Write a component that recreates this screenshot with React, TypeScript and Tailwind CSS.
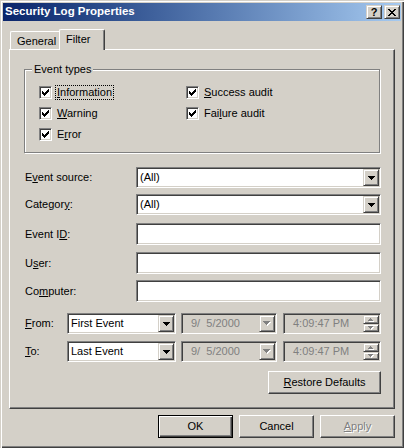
import React from "react";

const sunken =
  "border border-t-[#808080] border-l-[#808080] border-r-white border-b-white shadow-[inset_1px_1px_#404040,inset_-1px_-1px_#d4d0c8]";
const raisedBtn =
  "border border-t-[#d4d0c8] border-l-[#d4d0c8] border-r-[#404040] border-b-[#404040] shadow-[inset_1px_1px_#fff,inset_-1px_-1px_#808080]";
const pushBtn =
  "border border-t-white border-l-white border-r-[#404040] border-b-[#404040] shadow-[inset_-1px_-1px_#808080]";

function DownArrow({ disabled }: { disabled?: boolean }) {
  const d = "M0 0h7v1H0z M1 1h5v1H1z M2 2h3v1H2z M3 3h1v1H3z";
  if (disabled) {
    return (
      <svg width="8" height="5" viewBox="0 0 8 5" shapeRendering="crispEdges">
        <path d={d} fill="#fff" transform="translate(1 1)" />
        <path d={d} fill="#808080" />
      </svg>
    );
  }
  return (
    <svg width="7" height="4" viewBox="0 0 7 4" shapeRendering="crispEdges">
      <path d={d} fill="#000" />
    </svg>
  );
}

function SpinArrow({ up }: { up?: boolean }) {
  const d = up ? "M2 0h1v1H2z M1 1h3v1H1z M0 2h5v1H0z" : "M0 0h5v1H0z M1 1h3v1H1z M2 2h1v1H2z";
  return (
    <svg width="6" height="4" viewBox="0 0 6 4" shapeRendering="crispEdges">
      <path d={d} fill="#fff" transform="translate(1 1)" />
      <path d={d} fill="#808080" />
    </svg>
  );
}

function Check() {
  return (
    <svg width="7" height="7" viewBox="0 0 7 7" shapeRendering="crispEdges">
      <path
        d="M0 2h1v3H0z M1 3h1v3H1z M2 4h1v3H2z M3 3h1v3H3z M4 2h1v3H4z M5 1h1v3H5z M6 0h1v3H6z"
        fill="#000"
      />
    </svg>
  );
}

function CheckBox({ children, focus }: { children: React.ReactNode; focus?: boolean }) {
  return (
    <div className="flex items-center h-[13px]">
      <span className={`w-[13px] h-[13px] bg-white flex items-center justify-center shrink-0 ${sunken}`}>
        <Check />
      </span>
      <span
        className={`ml-[3px] px-[1px] leading-[13px] border ${
          focus ? "border-dotted border-black" : "border-transparent"
        }`}
      >
        {children}
      </span>
    </div>
  );
}

function Combo({
  text,
  w,
  disabled,
}: {
  text: string;
  w: string;
  disabled?: boolean;
}) {
  return (
    <div className={`flex h-[21px] p-[1px] ${w} ${disabled ? "bg-[#d4d0c8]" : "bg-white"} ${sunken}`}>
      <div
        className={`flex-1 flex items-center whitespace-pre ${disabled ? "pl-[8px] text-[#808080]" : "pl-[2px]"}`}
      >
        {text}
      </div>
      <div className={`w-[16px] h-full flex items-center justify-center bg-[#d4d0c8] ${raisedBtn}`}>
        <DownArrow disabled={disabled} />
      </div>
    </div>
  );
}

function TimeBox() {
  return (
    <div className={`flex h-[21px] p-[1px] w-[98px] bg-[#d4d0c8] ${sunken}`}>
      <div className="flex-1 flex items-center pl-[8px] text-[#808080]">4:09:47 PM</div>
      <div className="w-[16px] h-full flex flex-col">
        <div className={`h-[9px] flex items-center justify-center bg-[#d4d0c8] ${raisedBtn}`}>
          <SpinArrow up />
        </div>
        <div className={`h-[8px] flex items-center justify-center bg-[#d4d0c8] ${raisedBtn}`}>
          <SpinArrow />
        </div>
      </div>
    </div>
  );
}

function Edit() {
  return <div className={`h-[22px] w-[245px] bg-white ${sunken}`} />;
}

function Label({ children, w }: { children: React.ReactNode; w: string }) {
  return <span className={`${w} pl-[1px] shrink-0`}>{children}</span>;
}

export default function App() {
  return (
    <div className="w-[404px] h-[448px] bg-[#d4d0c8] p-[3px] flex flex-col font-['Liberation_Sans',Arial,sans-serif] text-[11px] text-black leading-none overflow-hidden shadow-[inset_1px_1px_#d4d0c8,inset_2px_2px_#fff,inset_-1px_-1px_#404040,inset_-2px_-2px_#808080]">
      {/* Title bar */}
      <div className="h-[18px] shrink-0 flex items-center bg-linear-to-r from-[#0a246a] to-[#a6caf0] pl-[2px] pr-[1px]">
        <span className="font-bold text-white text-[11.5px] flex-1">Security Log Properties</span>
        <div className="flex gap-[2px]">
          <div className={`w-[16px] h-[14px] bg-[#d4d0c8] flex items-center justify-center ${raisedBtn}`}>
            <span className="font-bold text-[11px] leading-none pt-[1px]">?</span>
          </div>
          <div className={`w-[16px] h-[14px] bg-[#d4d0c8] flex items-center justify-center ${raisedBtn}`}>
            <svg width="8" height="7" viewBox="0 0 8 7" shapeRendering="crispEdges">
              <path
                d="M0 0h2v1H0z M6 0h2v1H6z M1 1h2v1H1z M5 1h2v1H5z M2 2h4v1H2z M3 3h2v1H3z M2 4h4v1H2z M1 5h2v1H1z M5 5h2v1H5z M0 6h2v1H0z M6 6h2v1H6z"
                fill="#000"
              />
            </svg>
          </div>
        </div>
      </div>

      {/* Client */}
      <div className="ml-[6px] w-[386px] mt-[8px] flex flex-col">
        {/* Tabs */}
        <div className="h-[20px] flex items-end relative z-10">
          <div className="ml-[1px] w-[49px] h-[18px] border-t border-l border-t-white border-l-white rounded-tl-[2px] flex items-center pl-[6px] pt-[2px]">
            General
          </div>
          <div className="w-[46px] h-[21px] mb-[-1px] bg-[#d4d0c8] border-t border-l border-r border-t-white border-l-white border-r-[#404040] shadow-[inset_-1px_0_#808080] rounded-t-[2px] flex items-center pl-[6px] pb-[1px]">
            Filter
          </div>
        </div>

        {/* Panel */}
        <div className="h-[360px] border border-t-white border-l-white border-r-[#404040] border-b-[#404040] shadow-[inset_-1px_-1px_#808080] pl-[14px] pr-[13px] flex flex-col">
          {/* Group box */}
          <div className="relative mt-[19px] h-[84px] w-[356px] border border-[#808080] shadow-[inset_1px_1px_#fff,1px_1px_#fff]">
            <span className="absolute left-[7px] top-[-7px] px-[2px] bg-[#d4d0c8] leading-[13px]">Event types</span>
            <div className="grid grid-cols-[147px_auto] gap-y-[8px] pl-[14px] pt-[16px]">
              <CheckBox focus>
                <u>I</u>nformation
              </CheckBox>
              <CheckBox>
                <u>S</u>uccess audit
              </CheckBox>
              <CheckBox>
                <u>W</u>arning
              </CheckBox>
              <CheckBox>
                Fai<u>l</u>ure audit
              </CheckBox>
              <CheckBox>
                E<u>r</u>ror
              </CheckBox>
            </div>
          </div>

          <div className="flex items-center mt-[14px]">
            <Label w="w-[112px]">
              E<u>v</u>ent source:
            </Label>
            <Combo text="(All)" w="w-[245px]" />
          </div>
          <div className="flex items-center mt-[6px]">
            <Label w="w-[112px]">
              Categor<u>y</u>:
            </Label>
            <Combo text="(All)" w="w-[245px]" />
          </div>
          <div className="flex items-center mt-[8px]">
            <Label w="w-[112px]">
              Event I<u>D</u>:
            </Label>
            <Edit />
          </div>
          <div className="flex items-center mt-[7px]">
            <Label w="w-[112px]">
              U<u>s</u>er:
            </Label>
            <Edit />
          </div>
          <div className="flex items-center mt-[6px]">
            <Label w="w-[112px]">
              Co<u>m</u>puter:
            </Label>
            <Edit />
          </div>
          <div className="flex items-center mt-[11px]">
            <Label w="w-[43px]">
              <u>F</u>rom:
            </Label>
            <Combo text="First Event" w="w-[109px]" />
            <div className="ml-[5px]">
              <Combo text="9/  5/2000" w="w-[96px]" disabled />
            </div>
            <div className="ml-[6px]">
              <TimeBox />
            </div>
          </div>
          <div className="flex items-center mt-[7px]">
            <Label w="w-[43px]">
              <u>T</u>o:
            </Label>
            <Combo text="Last Event" w="w-[109px]" />
            <div className="ml-[5px]">
              <Combo text="9/  5/2000" w="w-[96px]" disabled />
            </div>
            <div className="ml-[6px]">
              <TimeBox />
            </div>
          </div>
          <div className="mt-[9px] self-end">
            <button className={`w-[113px] h-[23px] bg-[#d4d0c8] flex items-center justify-center ${pushBtn}`}>
              <span>
                <u>R</u>estore Defaults
              </span>
            </button>
          </div>
        </div>

        {/* Bottom buttons */}
        <div className="mt-[6px] flex justify-end gap-[6px]">
          <button className="w-[75px] h-[23px] bg-[#d4d0c8] border border-black shadow-[inset_1px_1px_#fff,inset_-1px_-1px_#404040,inset_-2px_-2px_#808080] flex items-center justify-center">
            OK
          </button>
          <button className={`w-[75px] h-[23px] bg-[#d4d0c8] flex items-center justify-center ${pushBtn}`}>
            Cancel
          </button>
          <button
            className={`w-[75px] h-[23px] bg-[#d4d0c8] flex items-center justify-center text-[#808080] [text-shadow:1px_1px_0_#fff] ${pushBtn}`}
          >
            <span>
              <u>A</u>pply
            </span>
          </button>
        </div>
      </div>
    </div>
  );
}
